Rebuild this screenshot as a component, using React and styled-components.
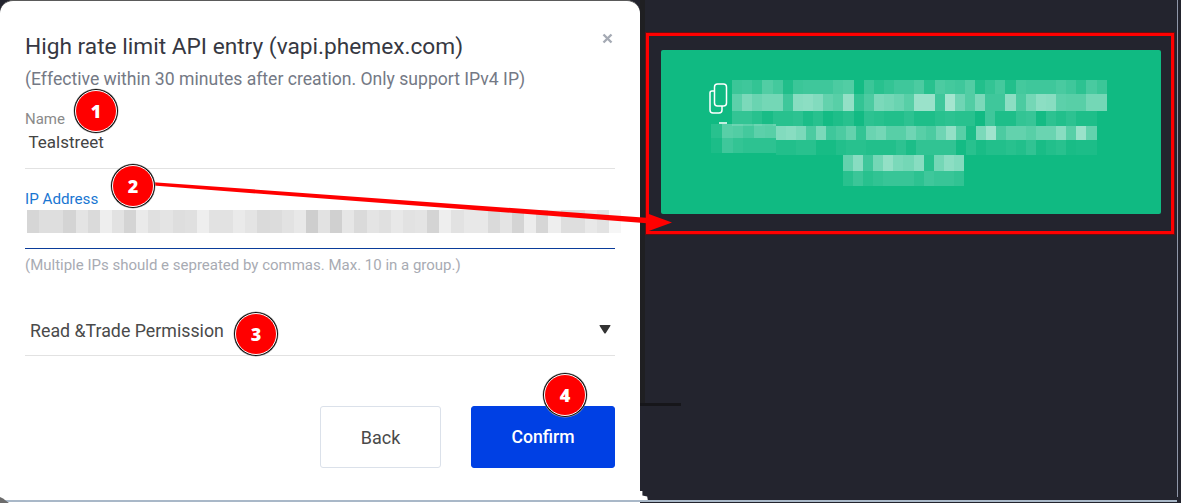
import React from 'react';
import styled, { createGlobalStyle } from 'styled-components';

const Global = createGlobalStyle`
  html, body { margin: 0; padding: 0; background: #23242e; }
  #root { width: 1181px; height: 503px; overflow: hidden; }
  * { box-sizing: border-box; }
`;

const Page = styled.div`
  position: relative;
  display: flex;
  width: 1181px;
  height: 503px;
  background: #23242e;
  font-family: Roboto, "Liberation Sans", sans-serif;
  overflow: hidden;
`;

const Modal = styled.section`
  position: relative;
  flex: 0 0 640px;
  min-width: 0;
  height: 503px;
  padding: 30px 25px 0;
  background: #fff;
  border-top: 1px solid #5a5a5a;
  border-radius: 13px 13px 0 0;
  display: flex;
  flex-direction: column;
`;

const Close = styled.span`
  position: absolute;
  top: 28px;
  right: 27px;
  width: 11px;
  height: 11px;
`;

const Title = styled.h2`
  margin: 0;
  font-size: 22.7px;
  line-height: 32px;
  font-weight: 400;
  white-space: nowrap;
  color: #363842;
`;

const Subtitle = styled.p`
  margin: 5px 0 0;
  font-size: 17.6px;
  line-height: 22px;
  white-space: nowrap;
  color: #747985;
`;

const Label = styled.label`
  display: block;
  padding-top: 1px;
  font-size: ${p => (p.$active ? '15.2px' : '15px')};
  line-height: 18px;
  color: ${p => (p.$active ? '#1976d2' : '#8a8a8a')};
`;

const NameField = styled.div`
  margin-top: 19px;
  height: 60px;
  border-bottom: 1px solid #e2e2e2;
`;

const Value = styled.div`
  padding-left: 3.5px;
  margin-top: 3px;
  font-size: 17px;
  line-height: 22px;
  color: #444;
`;

const IpField = styled.div`
  margin-top: 20px;
  height: 60px;
  border-bottom: 1px solid #0a3c9a;
`;

const IpStrip = styled.div`
  display: flex;
  width: 595px;
  height: 23px;
  margin: 2px 0 0 2px;
`;

const IpCell = styled.i`
  flex: 0 0 12.14px;
  background: rgb(${p => p.$v}, ${p => p.$v}, ${p => p.$v});
`;

const Hint = styled.p`
  margin: 7px 0 0;
  font-size: 15px;
  line-height: 18px;
  white-space: nowrap;
  color: #a8abb3;
`;

const Select = styled.div`
  margin-top: 25px;
  height: 57px;
  padding: 20px 0 0 5px;
  display: flex;
  justify-content: space-between;
  border-bottom: 1px solid #e2e2e2;
  font-size: 17.8px;
  line-height: 24px;
  color: #4a4a4a;
`;

const Caret = styled.span`
  display: flex;
  width: 12px;
  height: 9px;
  margin: 6px 4px 0 0;
`;

const Actions = styled.div`
  display: flex;
  justify-content: flex-end;
  gap: 30px;
  margin-top: 50px;
`;

const Button = styled.button`
  width: ${p => (p.$primary ? '144px' : '121px')};
  height: 62px;
  padding: 0;
  border-radius: 3px;
  border: 1px solid ${p => (p.$primary ? '#0040e4' : '#dbe1ea')};
  background: ${p => (p.$primary ? '#0040e4' : '#fff')};
  color: ${p => (p.$primary ? '#fff' : '#4a4a4a')};
  font-family: inherit;
  font-size: ${p => (p.$primary ? '17.6px' : '18px')};
  font-weight: ${p => (p.$primary ? 500 : 400)};
`;

const Backdrop = styled.aside`
  position: relative;
  flex: 1;
  padding: 50px 0 0 21px;
`;

const Panel = styled.div`
  position: relative;
  width: 500px;
  height: 164px;
  padding-top: 30px;
  background: #10ba82;
  border-radius: 2px;
`;

const Band = styled.div`
  display: flex;
  height: ${p => p.$h}px;
  margin-left: ${p => p.$x}px;
`;

const Cell = styled.i`
  flex: 0 0 ${p => p.$w}px;
  background: rgba(255, 255, 255, ${p => p.$a});
`;

const Fragment = styled.div`
  position: absolute;
  left: 50px;
  top: 74px;
  width: 65px;
`;

const CopyIcon = styled.svg`
  position: absolute;
  left: 48px;
  top: 32px;
  width: 20px;
  height: 44px;
`;

const Frame = styled.div`
  position: absolute;
  left: 646px;
  top: 33px;
  width: 528px;
  height: 201px;
  border: 3px solid #f00;
  box-shadow: 0 0 0 1px rgba(150, 0, 0, 0.55);
  pointer-events: none;
`;

const Arrow = styled.svg`
  position: absolute;
  left: 0;
  top: 0;
  width: 1181px;
  height: 503px;
  pointer-events: none;
`;

const Badge = styled.div`
  position: absolute;
  left: ${p => p.$x - 21}px;
  top: ${p => p.$y - 21}px;
  width: 42px;
  height: 42px;
  border-radius: 50%;
  background: #f00;
  border: 1px solid #fff;
  box-shadow: 0 0 0 1px #111, 0 0 0 1.5px #aaa;
  display: flex;
  align-items: center;
  justify-content: center;
  color: #fff;
  font-family: "Open Sans", "DejaVu Sans", sans-serif;
  font-size: 18px;
  font-weight: 800;
`;

const SideLine = styled.div`
  position: absolute;
  left: 1177px;
  top: 0;
  height: 497px;
  width: 1px;
  background: #8f96a8;
`;

const BottomLine = styled.div`
  position: absolute;
  left: 0;
  width: 1177px;
  top: 500px;
  height: 1.5px;
  background: #a9b8c8;
`;

const EdgeStripe = styled.div`
  position: absolute;
  left: 640px;
  top: 0;
  width: 5px;
  height: 404px;
  background: #1f1f22;
`;

const Notch = styled.div`
  position: absolute;
  left: 640px;
  top: 403px;
  width: 41px;
  height: 3px;
  background: #16161a;
`;

const CornerChip = styled.div`
  position: absolute;
  left: 640px;
  top: 491px;
  width: 12px;
  height: 9px;
  background: #fff;
  clip-path: polygon(0 0, 20% 0, 20% 50%, 60% 60%, 65% 100%, 0 100%);
`;

const FootChip = styled.div`
  position: absolute;
  left: 0;
  top: 497px;
  width: 9px;
  height: 6px;
  background: #6c6c6c;
  clip-path: polygon(0 0, 40% 30%, 55% 50%, 100% 100%, 0 100%);
`;

const ipShades = [214,222,222,212,228,218,238,226,212,234,224,228,222,224,238,226,226,234,228,218,220,226,232,206,226,208,230,218,228,224,232,226,228,212,238,226,232,232,218,228,212,236,214,238,222,222,232,226,246];

const lines = [
  { h: 14, x: 71, w: 10.14, cells: [.18,.2,.15,.28,.22,.07,.18,.2,.2,.2,.25,.28,.02,.18,.1,.15,.2,.2,.25,.1,.25,.22,.2,.28,.08,.15,.22,.08,.22,.2,.2,.2,.24,.2,.12,.24,.18] },
  { h: 17, x: 71, w: 10.14, cells: [.32,.45,.38,.42,.42,.2,.5,.52,.48,.35,.3,.55,.15,.25,.45,.42,.38,.3,.58,.58,.2,.62,.4,.28,.45,.2,.2,.52,.25,.42,.52,.5,.32,.3,.3,.42,.42] },
  { h: 15, x: 71, w: 10.14, cells: [.15,.15,.1,.04,.1,.1,.12,.05,.1,.02,.06,.1,.01,.12,.1,.08,.08,.12,.06,.06,.1,.12,.1,.1,.01,.2,.06,.06,.15,.17,.02,.12,.08,.12,.06,.06] },
  { h: 14, x: 115, w: 10.03, cells: [.48,.5,.45,.25,.45,.2,.25,.35,.15,.38,.42,.3,.3,.4,.3,.25,.4,.55,.3,.05,.45,.6,.25,.35,.35,.3,.38,.38,.5,.3,.58,.35] },
  { h: 15, x: 115, w: 10.03, cells: [.08,.08,.1,.1,.03,.03,.08,.1,.1,.08,.08,.08,.12,.05,.14,.14,.14,.14,.02,.1,.04,.08,.08,.1,.08,.14,.04,.08,.1,.04,.05,.05] },
  { h: 16, x: 182, w: 10.08, cells: [.35,.5,.2,.42,.55,.45,.42,.5,.1,.42,.52,.48] },
  { h: 15, x: 182, w: 10.08, cells: [.1,.18,.1,.14,.17,.17,.17,.12,.2,.17,.17,.14] },
];

const fragmentRows = [
  { h: 14, x: 0, w: 10.8, cells: [.1,.3,.28,.22,.32,.3] },
  { h: 15, x: 0, w: 10.8, cells: [.05,.2,.15,.12,.12,.12] },
];

const Badges = [
  { n: 1, x: 96, y: 111 },
  { n: 2, x: 133, y: 186 },
  { n: 3, x: 256, y: 334 },
  { n: 4, x: 565, y: 395 },
];

export default function App() {
  return (
    <Page>
      <Global />
      <Modal>
        <Close>
          <svg width="11" height="11" viewBox="0 0 11 11">
            <path d="M1.5 1.5l8 8M9.5 1.5l-8 8" stroke="#a5aab4" strokeWidth="2.4" />
          </svg>
        </Close>
        <Title>High rate limit API entry (vapi.phemex.com)</Title>
        <Subtitle>(Effective within 30 minutes after creation. Only support IPv4 IP)</Subtitle>
        <NameField>
          <Label>Name</Label>
          <Value>Tealstreet</Value>
        </NameField>
        <IpField>
          <Label $active>IP Address</Label>
          <IpStrip>
            {ipShades.map((v, i) => <IpCell key={i} $v={v} />)}
          </IpStrip>
        </IpField>
        <Hint>(Multiple IPs should e sepreated by commas. Max. 10 in a group.)</Hint>
        <Select>
          <span>Read &amp;Trade Permission</span>
          <Caret>
            <svg width="12" height="9" viewBox="0 0 12 9">
              <path d="M1 0H11Q12 0 11.300 1L6.700 8.200Q6 9 5.300 8.200L.7 1Q0 0 1 0Z" fill="#333" />
            </svg>
          </Caret>
        </Select>
        <Actions>
          <Button>Back</Button>
          <Button $primary>Confirm</Button>
        </Actions>
      </Modal>
      <Backdrop>
        <Panel>
          {lines.map((l, i) => (
            <Band key={i} $h={l.h} $x={l.x}>
              {l.cells.map((a, j) => <Cell key={j} $a={a} $w={l.w} />)}
            </Band>
          ))}
          <CopyIcon viewBox="0 0 20 44">
            <g fill="none" stroke="#fff" strokeWidth="1.500">
              <rect x="5.500" y="2" width="12" height="22" rx="3" />
              <path d="M5 9H3a2 2 0 0 0-2 2V28a3 3 0 0 0 3 3h6a3 3 0 0 0 3-3v-4" />
              <path d="M10 41h8" />
            </g>
          </CopyIcon>
          <Fragment>
            {fragmentRows.map((l, i) => (
              <Band key={i} $h={l.h} $x={l.x}>
                {l.cells.map((a, j) => <Cell key={j} $a={a} $w={l.w} />)}
              </Band>
            ))}
          </Fragment>
        </Panel>
      </Backdrop>
      <EdgeStripe />
      <SideLine />
      <BottomLine />
      <CornerChip />
      <FootChip />
      <Notch />
      <Frame />
      <Arrow viewBox="0 0 1181 503">
        <polygon points="150,181.900 650,218 650,223.400 150,185.300" fill="#f00" />
        <polygon points="646,213 672,222.500 646,232" fill="#f00" />
      </Arrow>
      {Badges.map(b => <Badge key={b.n} $x={b.x} $y={b.y}>{b.n}</Badge>)}
    </Page>
  );
}
